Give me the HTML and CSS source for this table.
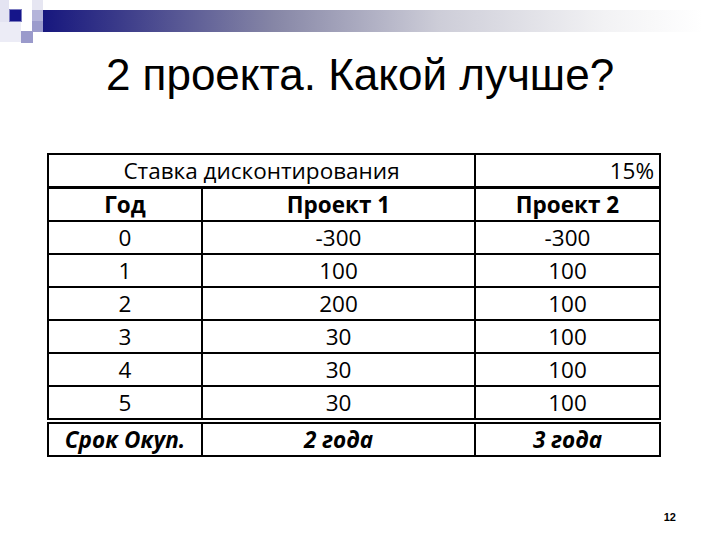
FILE: index.html
```html
<!DOCTYPE html>
<html lang="ru">
<head>
<meta charset="utf-8">
<title>2 проекта. Какой лучше?</title>
<link rel="stylesheet" href="styles.css">
</head>
<body>
<div class="slide">
  <svg class="deco" width="720" height="44" viewBox="0 0 720 44" xmlns="http://www.w3.org/2000/svg">
    <defs>
      <linearGradient id="bar" x1="0" y1="0" x2="1" y2="0">
        <stop offset="0" stop-color="#17177e"/>
        <stop offset="0.12" stop-color="#3c3c8a"/>
        <stop offset="0.35" stop-color="#8686a6"/>
        <stop offset="0.6" stop-color="#cdcdd8"/>
        <stop offset="0.85" stop-color="#f2f2f4"/>
        <stop offset="1" stop-color="#ffffff"/>
      </linearGradient>
    </defs>
    <rect x="0" y="0" width="9" height="42" fill="#e4e4f2"/>
    <rect x="0" y="22" width="21" height="20" fill="#ececf6"/>
    <rect x="32" y="0" width="11" height="10" fill="#e6e6f2"/>
    <rect x="32" y="10" width="11" height="11" fill="#b4b4da"/>
    <rect x="32" y="21" width="11" height="11" fill="#9c9ccc"/>
    <rect x="9.5" y="9.5" width="12" height="12" fill="#15158a" stroke="#7c7cc0" stroke-width="1"/>
    <rect x="21" y="31" width="12" height="12" fill="#9a9acb"/>
    <rect x="43" y="10" width="660" height="22" fill="url(#bar)"/>
  </svg>
  <h1 class="title">2 проекта. Какой лучше?</h1>
  <table class="grid">
    <colgroup>
      <col class="c1">
      <col class="c2">
      <col class="c3">
    </colgroup>
    <tr class="rate">
      <td colspan="2" class="center">Ставка дисконтирования</td>
      <td class="right">15%</td>
    </tr>
    <tr class="head">
      <td>Год</td>
      <td>Проект 1</td>
      <td>Проект 2</td>
    </tr>
    <tr><td>0</td><td>-300</td><td>-300</td></tr>
    <tr><td>1</td><td>100</td><td>100</td></tr>
    <tr><td>2</td><td>200</td><td>100</td></tr>
    <tr><td>3</td><td>30</td><td>100</td></tr>
    <tr><td>4</td><td>30</td><td>100</td></tr>
    <tr><td>5</td><td>30</td><td>100</td></tr>
    <tr class="total">
      <td>Срок Окуп.</td>
      <td>2 года</td>
      <td>3 года</td>
    </tr>
  </table>
  <div class="pagenum">12</div>
</div>
</body>
</html>
```
FILE: styles.css
```css
html, body {
  margin: 0;
  padding: 0;
  background: #ffffff;
}

.slide {
  width: 720px;
  height: 540px;
  overflow: hidden;
}

.deco {
  display: block;
}

.title {
  margin: 6px 0 0 0;
  font-family: "Liberation Sans", Arial, sans-serif;
  font-weight: normal;
  font-size: 44px;
  line-height: 50px;
  text-align: center;
  color: #000;
}

.grid {
  margin: 53px 0 0 47px;
  border-collapse: collapse;
  table-layout: fixed;
  width: 612px;
  border: 2px solid #000;
  font-family: "Open Sans", "Noto Sans", sans-serif;
  font-size: 22.5px;
  color: #000;
}

.c1 { width: 154px; }
.c2 { width: 273px; }
.c3 { width: 185px; }

.grid td {
  height: 31px;
  padding: 0;
  line-height: 28px;
  text-align: center;
  border: 2px solid #000;
}

.grid .rate td {
  border-bottom: 3px solid #000;
}

.grid .rate td.right {
  text-align: right;
  padding-right: 5px;
}

.grid .head td {
  font-weight: bold;
}

.grid .total td {
  font-weight: bold;
  font-style: italic;
  border-top: 6px double #000;
}

.pagenum {
  margin-top: 54px;
  padding-right: 44px;
  text-align: right;
  font-family: "Liberation Sans", Arial, sans-serif;
  font-weight: bold;
  font-size: 11px;
  line-height: 13px;
  color: #000;
}
```
